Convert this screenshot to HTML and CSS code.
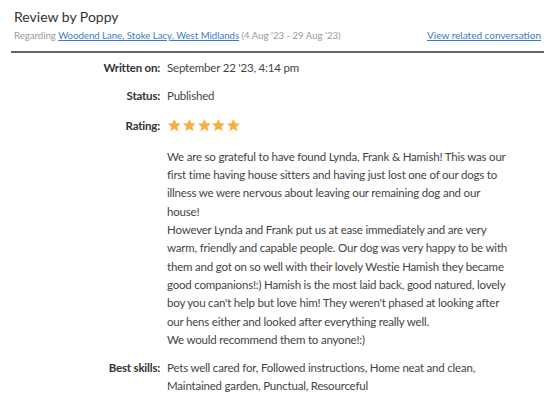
FILE: index.html
```html
<!DOCTYPE html>
<html>
<head>
<meta charset="utf-8">
<link rel="stylesheet" href="styles.css">
</head>
<body>
<div class="page">
  <header class="head">
    <h1 class="title">Review by Poppy</h1>
    <div class="subrow">
      <div class="regarding">Regarding <a href="#">Woodend Lane, Stoke Lacy, West Midlands</a> (4 Aug '23 - 29 Aug '23)</div>
      <a class="related" href="#">View related conversation</a>
    </div>
  </header>
  <div class="details">
    <div class="label row1">Written on:</div>
    <div class="value row1">September 22 '23, 4:14 pm</div>
    <div class="label row2">Status:</div>
    <div class="value row2">Published</div>
    <div class="label row3">Rating:</div>
    <div class="value row3 stars">
      <svg class="star" viewBox="0 0 24 24"><path d="M12 1.5l3.1 7 7.4.6-5.7 4.9 1.8 7.4L12 17.5l-6.6 3.9 1.8-7.4L1.5 9.1l7.4-.6z"/></svg>
      <svg class="star" viewBox="0 0 24 24"><path d="M12 1.5l3.1 7 7.4.6-5.7 4.9 1.8 7.4L12 17.5l-6.6 3.9 1.8-7.4L1.5 9.1l7.4-.6z"/></svg>
      <svg class="star" viewBox="0 0 24 24"><path d="M12 1.5l3.1 7 7.4.6-5.7 4.9 1.8 7.4L12 17.5l-6.6 3.9 1.8-7.4L1.5 9.1l7.4-.6z"/></svg>
      <svg class="star" viewBox="0 0 24 24"><path d="M12 1.5l3.1 7 7.4.6-5.7 4.9 1.8 7.4L12 17.5l-6.6 3.9 1.8-7.4L1.5 9.1l7.4-.6z"/></svg>
      <svg class="star" viewBox="0 0 24 24"><path d="M12 1.5l3.1 7 7.4.6-5.7 4.9 1.8 7.4L12 17.5l-6.6 3.9 1.8-7.4L1.5 9.1l7.4-.6z"/></svg>
    </div>
    <div class="label"></div>
    <div class="value review">We are so grateful to have found Lynda, Frank &amp; Hamish! This was our<br>first time having house sitters and having just lost one of our dogs to<br>illness we were nervous about leaving our remaining dog and our<br>house!<br>However Lynda and Frank put us at ease immediately and are very<br>warm, friendly and capable people. Our dog was very happy to be with<br>them and got on so well with their lovely Westie Hamish they became<br>good companions!:) Hamish is the most laid back, good natured, lovely<br>boy you can't help but love him! They weren't phased at looking after<br>our hens either and looked after everything really well.<br>We would recommend them to anyone!:)</div>
    <div class="label">Best skills:</div>
    <div class="value skills">Pets well cared for, Followed instructions, Home neat and clean,<br>Maintained garden, Punctual, Resourceful</div>
  </div>
</div>
</body>
</html>
```

FILE: styles.css
```css
html, body {
  margin: 0;
  padding: 0;
  background: #fff;
}
body {
  font-family: "Lato", "Open Sans", sans-serif;
  color: #444;
}
.page {
  padding: 7px 15px 0 11px;
}
.head {
  border-bottom: 2px solid #666;
  padding: 0 3px 8px 3px;
}
.title {
  margin: 0;
  font-size: 14px;
  font-weight: 400;
  color: #333;
  line-height: 20px;
}
.subrow {
  display: flex;
  justify-content: space-between;
  align-items: baseline;
  font-size: 9.6px;
  line-height: 14px;
  margin-top: 1px;
}
.regarding {
  color: #999;
}
.regarding a, .related {
  color: #3a7cc2;
  text-decoration: underline;
}
.related {
  font-size: 10px;
}
.details {
  display: grid;
  grid-template-columns: 149px 380px;
  column-gap: 7px;
  padding-top: 6px;
  font-size: 11.5px;
  letter-spacing: -0.2px;
  line-height: 18.3px;
}
.label {
  text-align: right;
  font-weight: 700;
  color: #333;
}
.value {
  color: #444;
}
.row1 { margin-bottom: 10px; }
.row2 { margin-bottom: 11px; }
.row3 { margin-bottom: 13px; }
.stars {
  display: flex;
  gap: 0;
  align-items: center;
}
.star {
  width: 14.8px;
  height: 14.8px;
  fill: #f5b041;
}
.review { margin-bottom: 10px; }
```
